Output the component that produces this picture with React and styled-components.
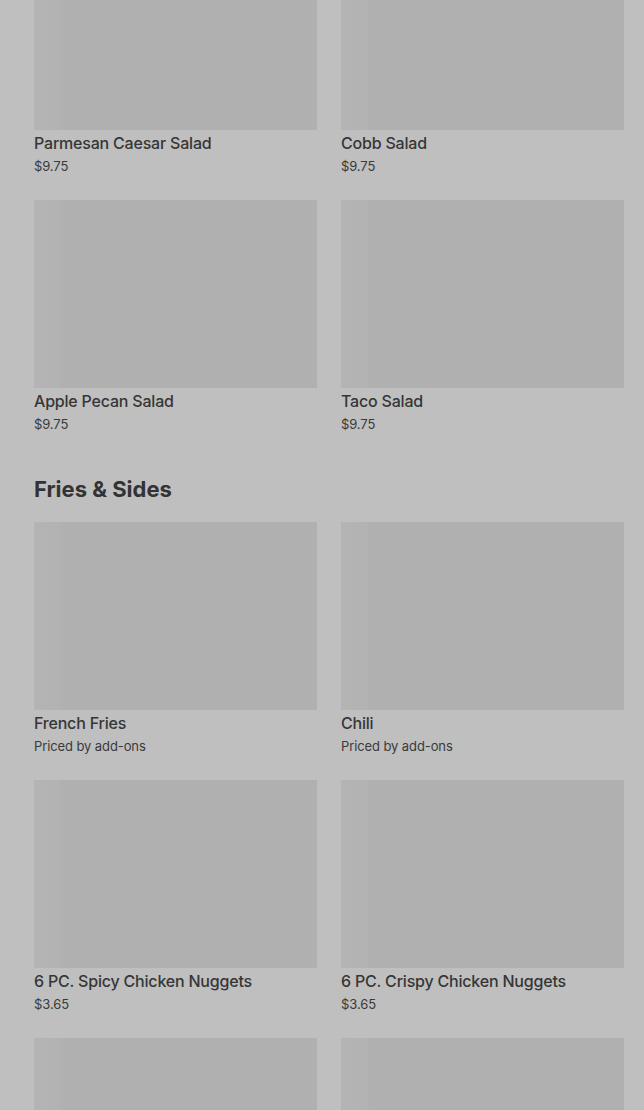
import styled, { createGlobalStyle } from 'styled-components';

const GlobalStyle = createGlobalStyle`
  html, body {
    margin: 0;
    padding: 0;
    background: #bfbfbf;
    overflow: hidden;
  }
  body {
    font-family: Inter, "Noto Sans", "Liberation Sans", sans-serif;
    color: #353535;
  }
`;

const Page = styled.main`
  margin-top: -58px;
  padding: 0 20px 0 34px;
`;

const Section = styled.section`
  & + & {
    margin-top: 41px;
  }
`;

const Heading = styled.h2`
  margin: 0 0 19px;
  font-size: 22px;
  line-height: 28px;
  font-weight: 700;
  letter-spacing: 0;
  color: #333;
`;

const Grid = styled.div`
  display: grid;
  grid-template-columns: repeat(2, 283px);
  column-gap: 24px;
  row-gap: 24px;
`;

const Card = styled.div`
  display: flex;
  flex-direction: column;
`;

const Thumb = styled.div`
  height: 188px;
  background: linear-gradient(90deg, #b4b4b4 0, #b3b3b3 24px, #b0b0b0 30px, #b0b0b0 100%);
`;

const Title = styled.div`
  margin-top: 2px;
  font-size: 16px;
  line-height: 22px;
  font-weight: 500;
  letter-spacing: -0.2px;
  color: #363636;
  white-space: nowrap;
`;

const Price = styled.div`
  margin-top: 2px;
  font-size: 13px;
  line-height: 20px;
  font-weight: 400;
  letter-spacing: -0.1px;
  color: #3a3a3a;
`;

const salads = [
  { name: 'Parmesan Caesar Salad', price: '$9.75' },
  { name: 'Cobb Salad', price: '$9.75' },
  { name: 'Apple Pecan Salad', price: '$9.75' },
  { name: 'Taco Salad', price: '$9.75' },
];

// last row only shows its pictures above the fold
const sides = [
  { name: 'French Fries', price: 'Priced by add-ons' },
  { name: 'Chili', price: 'Priced by add-ons' },
  { name: '6 PC. Spicy Chicken Nuggets', price: '$3.65' },
  { name: '6 PC. Crispy Chicken Nuggets', price: '$3.65' },
  { id: 'side-5' },
  { id: 'side-6' },
];

function Item({ name, price }) {
  return (
    <Card>
      <Thumb />
      {name && <Title>{name}</Title>}
      {price && <Price>{price}</Price>}
    </Card>
  );
}

export default function App() {
  return (
    <>
      <GlobalStyle />
      <Page>
        <Section>
          <Grid>
            {salads.map((s) => (
              <Item key={s.name} {...s} />
            ))}
          </Grid>
        </Section>
        <Section>
          <Heading>Fries &amp; Sides</Heading>
          <Grid>
            {sides.map((s) => (
              <Item key={s.name || s.id} {...s} />
            ))}
          </Grid>
        </Section>
      </Page>
    </>
  );
}
